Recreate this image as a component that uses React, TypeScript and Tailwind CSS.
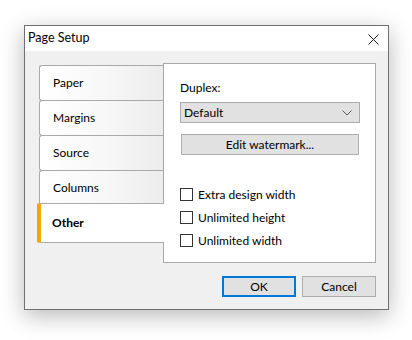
const tabs = ['Paper', 'Margins', 'Source', 'Columns'];
const options = ['Extra design width', 'Unlimited height', 'Unlimited width'];

export default function App() {
  return (
    <div className="min-h-[340px] w-[412px] bg-white pl-[24px] pt-[25px] font-['Lato',sans-serif] text-[12px] text-black">
      <div className="flex h-[285px] w-[365px] flex-col border border-[#6f6f6f] bg-[#f0f0f0] shadow-[0_6px_22px_rgba(0,0,0,0.28)]">
        {/* title bar */}
        <div className="flex h-[25px] shrink-0 items-center justify-between bg-white pl-[3px] pr-[9px]">
          <span className="text-[12.5px] leading-none">Page Setup</span>
          <svg width="11" height="11" viewBox="0 0 11 11" className="mt-px">
            <path d="M0.5 0.5L10.5 10.5M10.5 0.5L0.5 10.5" stroke="#1a1a1a" strokeWidth="1" />
          </svg>
        </div>

        <div className="flex pl-[14px] pt-[12px]">
          {/* tab strip */}
          <div className="relative z-10 mt-[2px] flex w-[124px] flex-col">
            {tabs.map((tab, i) => (
              <div
                key={tab}
                className={`flex h-[36px] items-center rounded-l-[3px] border-y border-l border-[#a9a9a9] bg-[linear-gradient(90deg,#ffffff_0%,#f7f7f7_55%,#ececec_100%)] pl-[13px] ${i > 0 ? '-mt-px' : ''}`}
              >
                {tab}
              </div>
            ))}
            <div className="-ml-[2px] -mr-px -mt-[3px] flex h-[40px] items-center rounded-l-[2px] border-y border-l-4 border-y-[#a9a9a9] border-l-[#f7a600] bg-white pl-[11px] font-bold">
              Other
            </div>
          </div>

          {/* panel */}
          <div className="flex h-[200px] w-[213px] flex-col border border-[#a9a9a9] bg-white pl-[16px] pt-[15px]">
            <span className="leading-[18px]">Duplex:</span>
            <div className="mt-[5px] flex h-[21px] w-[180px] items-center justify-between border border-[#adadad] bg-[#e1e1e1] pl-[3px] pr-[7px]">
              <span>Default</span>
              <svg width="10" height="6" viewBox="0 0 10 6">
                <path d="M0.5 0.5L5 5L9.5 0.5" fill="none" stroke="#606060" strokeWidth="1" />
              </svg>
            </div>
            <button className="ml-px mt-[11px] flex h-[21px] w-[178px] items-center justify-center border border-[#adadad] bg-[#e1e1e1]">
              Edit watermark...
            </button>
            <div className="mt-[33px] flex flex-col gap-[10px]">
              {options.map((label) => (
                <label key={label} className="flex h-[13px] items-center gap-[5px]">
                  <span className="h-[13px] w-[13px] border border-[#333] bg-white" />
                  <span className="leading-none">{label}</span>
                </label>
              ))}
            </div>
          </div>
        </div>

        {/* footer */}
        <div className="mt-[13px] flex justify-end gap-[6px] pr-[12px]">
          <button className="flex h-[21px] w-[74px] items-center justify-center border-2 border-[#0078d7] bg-[#e1e1e1]">
            OK
          </button>
          <button className="flex h-[21px] w-[74px] items-center justify-center border border-[#adadad] bg-[#e1e1e1]">
            Cancel
          </button>
        </div>
      </div>
    </div>
  );
}
